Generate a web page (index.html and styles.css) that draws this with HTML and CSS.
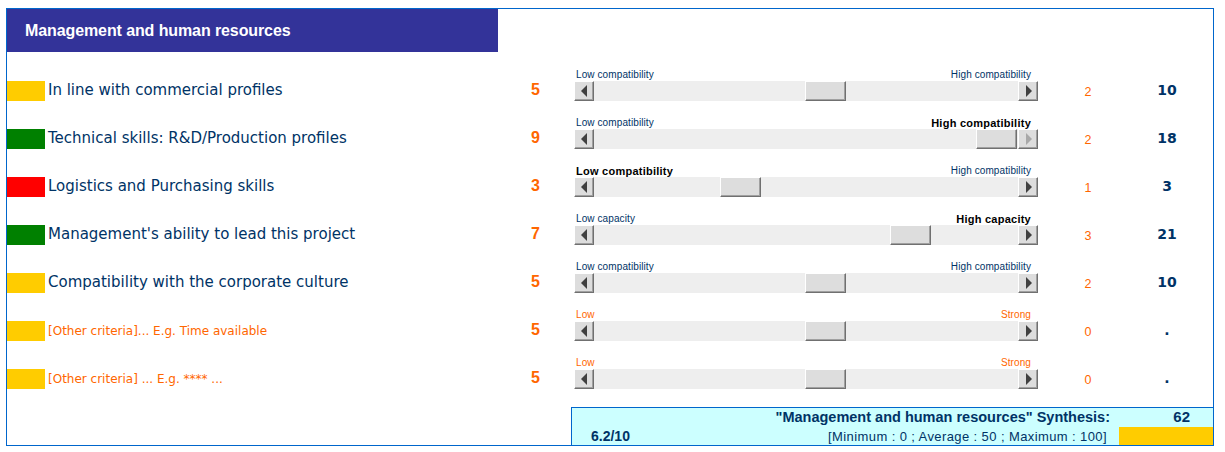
FILE: index.html
```html
<!DOCTYPE html>
<html lang="en">
<head>
<meta charset="utf-8">
<title>Management and human resources</title>
<link rel="stylesheet" href="styles.css">
</head>
<body>
<div class="panel">
  <div class="title">Management and human resources</div>
  <div class="rows">
    <div class="row">
      <div class="swatch yellow"></div>
      <div class="label">In line with commercial profiles</div>
      <div class="score">5</div>
      <div class="spacer"></div>
      <div class="scroll">
        <div class="ends"><span class="lo">Low compatibility</span><span class="hi">High compatibility</span></div>
        <div class="bar"><div class="btn"><i class="arr left"></i></div><div class="track"><div class="thumb" style="margin-left:211px"></div></div><div class="btn"><i class="arr right"></i></div></div>
      </div>
      <div class="weight">2</div>
      <div class="total">10</div>
    </div>
    <div class="row">
      <div class="swatch green"></div>
      <div class="label">Technical skills: R&amp;D/Production profiles</div>
      <div class="score">9</div>
      <div class="spacer"></div>
      <div class="scroll">
        <div class="ends"><span class="lo">Low compatibility</span><span class="hi strong">High compatibility</span></div>
        <div class="bar"><div class="btn"><i class="arr left"></i></div><div class="track"><div class="thumb" style="margin-left:382px"></div></div><div class="btn"><i class="arr right off"></i></div></div>
      </div>
      <div class="weight">2</div>
      <div class="total">18</div>
    </div>
    <div class="row">
      <div class="swatch red"></div>
      <div class="label">Logistics and Purchasing skills</div>
      <div class="score">3</div>
      <div class="spacer"></div>
      <div class="scroll">
        <div class="ends"><span class="lo strong">Low compatibility</span><span class="hi">High compatibility</span></div>
        <div class="bar"><div class="btn"><i class="arr left"></i></div><div class="track"><div class="thumb" style="margin-left:126px"></div></div><div class="btn"><i class="arr right"></i></div></div>
      </div>
      <div class="weight">1</div>
      <div class="total">3</div>
    </div>
    <div class="row">
      <div class="swatch green"></div>
      <div class="label">Management's ability to lead this project</div>
      <div class="score">7</div>
      <div class="spacer"></div>
      <div class="scroll">
        <div class="ends"><span class="lo">Low capacity</span><span class="hi strong">High capacity</span></div>
        <div class="bar"><div class="btn"><i class="arr left"></i></div><div class="track"><div class="thumb" style="margin-left:296px"></div></div><div class="btn"><i class="arr right"></i></div></div>
      </div>
      <div class="weight">3</div>
      <div class="total">21</div>
    </div>
    <div class="row">
      <div class="swatch yellow"></div>
      <div class="label">Compatibility with the corporate culture</div>
      <div class="score">5</div>
      <div class="spacer"></div>
      <div class="scroll">
        <div class="ends"><span class="lo">Low compatibility</span><span class="hi">High compatibility</span></div>
        <div class="bar"><div class="btn"><i class="arr left"></i></div><div class="track"><div class="thumb" style="margin-left:211px"></div></div><div class="btn"><i class="arr right"></i></div></div>
      </div>
      <div class="weight">2</div>
      <div class="total">10</div>
    </div>
    <div class="row">
      <div class="swatch yellow"></div>
      <div class="label other">[Other criteria]... E.g. Time available</div>
      <div class="score">5</div>
      <div class="spacer"></div>
      <div class="scroll">
        <div class="ends"><span class="lo orange">Low</span><span class="hi orange">Strong</span></div>
        <div class="bar"><div class="btn"><i class="arr left"></i></div><div class="track"><div class="thumb" style="margin-left:211px"></div></div><div class="btn"><i class="arr right"></i></div></div>
      </div>
      <div class="weight">0</div>
      <div class="total">.</div>
    </div>
    <div class="row">
      <div class="swatch yellow"></div>
      <div class="label other">[Other criteria] ... E.g. **** ...</div>
      <div class="score">5</div>
      <div class="spacer"></div>
      <div class="scroll">
        <div class="ends"><span class="lo orange">Low</span><span class="hi orange">Strong</span></div>
        <div class="bar"><div class="btn"><i class="arr left"></i></div><div class="track"><div class="thumb" style="margin-left:211px"></div></div><div class="btn"><i class="arr right"></i></div></div>
      </div>
      <div class="weight">0</div>
      <div class="total">.</div>
    </div>
  </div>
  <div class="synth">
    <div class="synth-title">"Management and human resources" Synthesis:</div>
    <div class="synth-score">62</div>
    <div class="synth-line"><span class="rating">6.2/10</span><span class="range">[Minimum : 0 ; Average : 50 ; Maximum : 100]</span></div>
    <div class="synth-flag"></div>
  </div>
</div>
</body>
</html>
```
FILE: styles.css
```css
html, body {
  margin: 0;
  padding: 0;
  background: #ffffff;
}

body {
  font-family: "Liberation Sans", Arial, sans-serif;
}

.panel {
  box-sizing: border-box;
  margin: 8px 0 0 6px;
  width: 1208px;
  height: 438px;
  border: 1px solid #0066cc;
}

.title {
  width: 473px;
  height: 43px;
  padding-left: 18px;
  background: #333399;
  color: #ffffff;
  font-family: "Liberation Sans", Arial, sans-serif;
  font-weight: bold;
  font-size: 16px;
  line-height: 43px;
  letter-spacing: -0.1px;
}

.rows {
  margin-top: 13px;
}

.row {
  display: grid;
  grid-template-columns: 38px 480px 21px 28px 464px 100px 58px;
  height: 48px;
  align-items: start;
}

.swatch {
  margin-top: 16px;
  height: 20px;
}
.yellow { background: #ffcc00; }
.green { background: #008000; }
.red { background: #ff0000; }

.label {
  margin-top: 15px;
  padding-left: 3px;
  line-height: 20px;
  font-family: "DejaVu Sans", Verdana, sans-serif;
  font-size: 15px;
  color: #003366;
  white-space: nowrap;
}
.label.other {
  margin-top: 16px;
  font-size: 12px;
  color: #ff6600;
}

.score {
  margin-top: 15px;
  line-height: 20px;
  text-align: center;
  font-family: "Liberation Sans", Arial, sans-serif;
  font-weight: bold;
  font-size: 16px;
  color: #ff6600;
}

.scroll {
  margin-top: 4px;
  display: flex;
  flex-direction: column;
}

.ends {
  display: flex;
  justify-content: space-between;
  height: 12px;
  padding: 0 7px 0 2px;
  font-size: 10px;
  line-height: 12px;
  letter-spacing: 0.1px;
  color: #003366;
  white-space: nowrap;
}
.ends .strong {
  font-weight: bold;
  font-size: 11px;
  color: #000000;
  letter-spacing: 0.25px;
}
.ends .orange {
  color: #ff6600;
}

.bar {
  display: flex;
  height: 20px;
  background: #eeeeee;
}

.btn {
  box-sizing: border-box;
  width: 20px;
  height: 20px;
  flex: none;
  display: flex;
  align-items: center;
  justify-content: center;
  background: #dddddd;
  border-top: 1px solid #ffffff;
  border-left: 1px solid #ffffff;
  border-right: 1px solid #707070;
  border-bottom: 1px solid #707070;
  box-shadow: inset -1px -1px 0 #a0a0a0;
}

.track {
  flex: 1;
  display: flex;
  height: 20px;
}

.thumb {
  box-sizing: border-box;
  width: 41px;
  height: 20px;
  background: #dddddd;
  border-top: 1px solid #ffffff;
  border-left: 1px solid #ffffff;
  border-right: 1px solid #707070;
  border-bottom: 1px solid #707070;
  box-shadow: inset -1px -1px 0 #a0a0a0;
}

.arr {
  display: block;
  width: 0;
  height: 0;
  border-top: 6px solid transparent;
  border-bottom: 6px solid transparent;
}
.arr.left {
  border-right: 6px solid #404040;
  margin-right: 1px;
}
.arr.right {
  border-left: 6px solid #404040;
  margin-left: 1px;
}
.arr.right.off {
  border-left-color: #a8a8a8;
}

.weight {
  margin-top: 17px;
  line-height: 20px;
  text-align: center;
  font-size: 12.5px;
  color: #ff6600;
}

.total {
  margin-top: 15px;
  line-height: 20px;
  text-align: center;
  font-family: "DejaVu Sans", Verdana, sans-serif;
  font-weight: bold;
  font-size: 14px;
  color: #003366;
}

.synth {
  margin: 6px 0 0 564px;
  height: 38px;
  box-sizing: border-box;
  border-top: 1px solid #0066cc;
  border-left: 1px solid #0066cc;
  background: #ccffff;
  display: grid;
  grid-template-columns: 547px 94px;
  grid-template-rows: 19px 18px;
  color: #003366;
}

.synth-title {
  padding-right: 9px;
  text-align: right;
  font-weight: bold;
  font-size: 14.5px;
  line-height: 19px;
  white-space: nowrap;
}

.synth-score {
  padding-right: 23px;
  text-align: right;
  font-weight: bold;
  font-size: 15px;
  line-height: 17px;
}

.synth-line {
  display: flex;
  justify-content: space-between;
  align-items: center;
  padding: 0 12px 0 19px;
}

.rating {
  font-weight: bold;
  font-size: 14px;
}

.range {
  font-size: 13px;
  letter-spacing: 0.4px;
  white-space: nowrap;
}

.synth-flag {
  background: #ffcc00;
}
```
